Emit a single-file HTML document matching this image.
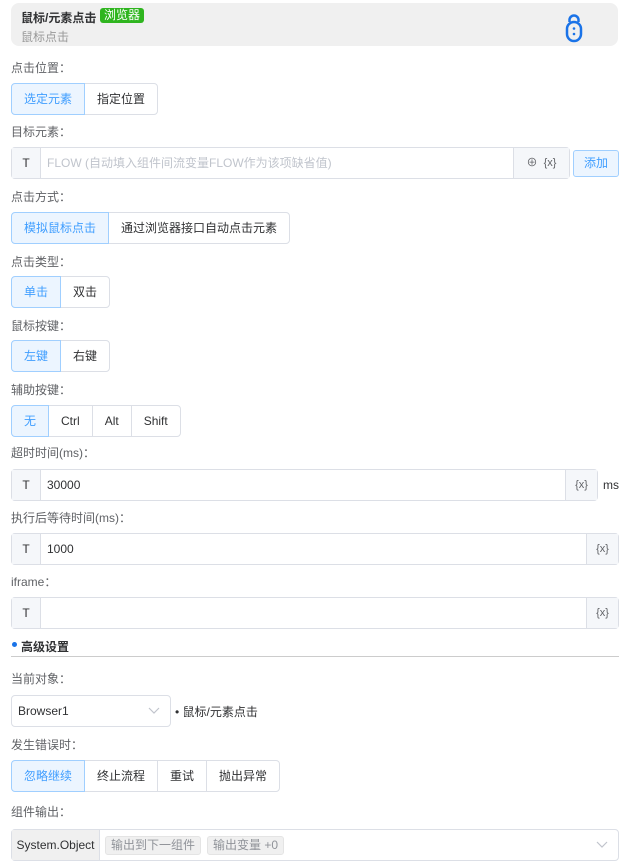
<!DOCTYPE html>
<html><head><meta charset="utf-8"><style>
*{box-sizing:border-box;margin:0;padding:0}
body{width:630px;height:866px;background:#fff;font-family:"Liberation Sans","Noto Sans CJK SC",sans-serif;font-size:12px;color:#606266;position:relative;overflow:hidden}
.a{position:absolute}
.lbl{position:absolute;left:11px;font-size:12px;color:#606266;line-height:14px}
.grp{position:absolute;left:11px;display:flex;height:32px}
.grp div{border:1px solid #dcdfe6;margin-left:-1px;padding:0 12px;line-height:30px;color:#303133;background:#fff}
.grp div:first-child{margin-left:0;border-radius:4px 0 0 4px}
.grp div:last-child{border-radius:0 4px 4px 0}
.grp div.on{background:#ecf5ff;border-color:#a0cfff;color:#409eff;position:relative;z-index:1}
.inp{position:absolute;left:11px;height:32px;border:1px solid #dcdfe6;border-radius:4px;display:flex;background:#fff}
.inp .t{width:29px;background:#f5f7fa;border-right:1px solid #dcdfe6;text-align:center;line-height:30px;color:#303133}
.inp .v{flex:1;padding-left:6px;line-height:30px;color:#303133}
.inp .x{width:32px;background:#f5f7fa;border-left:1px solid #dcdfe6;text-align:center;line-height:30px;font-size:11px;color:#606266}
.chev{position:absolute;right:10px;top:11px}
</style></head><body>
<div class="a" style="left:11px;top:3px;width:607px;height:43px;background:#f0f0f0;border-radius:8px"></div>
<div class="a" style="left:21px;top:9px;font-weight:bold;color:#303133;font-size:12px">鼠标/元素点击</div>
<div class="a" style="left:100px;top:8px;width:44px;height:15px;background:#2fb51f;border-radius:3px;color:#fff;font-size:12px;line-height:15px;text-align:center">浏览器</div>
<div class="a" style="left:21px;top:28px;color:#999">鼠标点击</div>
<svg class="a" style="left:563px;top:12px" width="22" height="32" viewBox="0 0 22 32"><path d="M6.5 10V8a4.5 4.5 0 0 1 9 0v2" fill="none" stroke="#1a73e8" stroke-width="2.5"/><rect x="4" y="10" width="14" height="19" rx="7" fill="none" stroke="#1a73e8" stroke-width="2.5"/><circle cx="11" cy="16.5" r="1.3" fill="#1a73e8"/><circle cx="11" cy="22" r="1.3" fill="#1a73e8"/></svg>

<div class="lbl" style="top:61px">点击位置：</div>
<div class="grp" style="top:83px"><div class="on">选定元素</div><div>指定位置</div></div>

<div class="lbl" style="top:125px">目标元素：</div>
<div class="inp" style="top:147px;width:559px"><div class="t">T</div><div class="v" style="color:#c0c4cc">FLOW (自动填入组件间流变量FLOW作为该项缺省值)</div><div class="x" style="width:56px">⊕ &nbsp;{x}</div></div>
<div class="a" style="left:573px;top:150px;width:46px;height:27px;background:#ecf5ff;border:1px solid #a0cfff;border-radius:3px;color:#409eff;text-align:center;line-height:25px">添加</div>

<div class="lbl" style="top:190px">点击方式：</div>
<div class="grp" style="top:212px"><div class="on">模拟鼠标点击</div><div>通过浏览器接口自动点击元素</div></div>

<div class="lbl" style="top:255px">点击类型：</div>
<div class="grp" style="top:276px"><div class="on">单击</div><div>双击</div></div>

<div class="lbl" style="top:319px">鼠标按键：</div>
<div class="grp" style="top:340px"><div class="on">左键</div><div>右键</div></div>

<div class="lbl" style="top:383px">辅助按键：</div>
<div class="grp" style="top:405px"><div class="on">无</div><div>Ctrl</div><div>Alt</div><div>Shift</div></div>

<div class="lbl" style="top:446px">超时时间(ms)：</div>
<div class="inp" style="top:469px;width:587px"><div class="t">T</div><div class="v">30000</div><div class="x">{x}</div></div>
<div class="a" style="left:603px;top:478px;color:#303133">ms</div>

<div class="lbl" style="top:511px">执行后等待时间(ms)：</div>
<div class="inp" style="top:533px;width:608px"><div class="t">T</div><div class="v">1000</div><div class="x">{x}</div></div>

<div class="lbl" style="top:575px">iframe：</div>
<div class="inp" style="top:597px;width:608px"><div class="t">T</div><div class="v"></div><div class="x">{x}</div></div>

<div class="a" style="left:12px;top:642px;width:5px;height:5px;border-radius:50%;background:#1a73e8"></div>
<div class="a" style="left:21px;top:638px;font-weight:bold;color:#303133">高级设置</div>
<div class="a" style="left:11px;top:656px;width:608px;height:1px;background:#ccc"></div>

<div class="lbl" style="top:672px">当前对象：</div>
<div class="a" style="left:11px;top:695px;width:160px;height:32px;border:1px solid #dcdfe6;border-radius:4px;padding-left:6px;line-height:30px;color:#303133">Browser1<svg class="chev" width="12" height="8" viewBox="0 0 12 8"><path d="M1 1l5 5 5-5" fill="none" stroke="#c0c4cc" stroke-width="1.2"/></svg></div>
<div class="a" style="left:175px;top:703px;color:#303133">• 鼠标/元素点击</div>

<div class="lbl" style="top:738px">发生错误时：</div>
<div class="grp" style="top:760px"><div class="on">忽略继续</div><div>终止流程</div><div>重试</div><div>抛出异常</div></div>

<div class="lbl" style="top:805px">组件输出：</div>
<div class="a" style="left:11px;top:829px;width:608px;height:32px;border:1px solid #dcdfe6;border-radius:4px;display:flex">
<div style="width:88px;background:#f0f0f0;border-right:1px solid #dcdfe6;line-height:30px;text-align:center;color:#303133">System.Object</div>
<div style="margin:6px 0 0 5px;height:19px;padding:0 5px;background:#f0f0f0;border:1px solid #e4e4e4;border-radius:3px;line-height:17px;color:#909399">输出到下一组件</div>
<div style="margin:6px 0 0 6px;height:19px;padding:0 5px;background:#f0f0f0;border:1px solid #e4e4e4;border-radius:3px;line-height:17px;color:#909399">输出变量 +0</div>
<svg class="chev" width="12" height="8" viewBox="0 0 12 8"><path d="M1 1l5 5 5-5" fill="none" stroke="#c0c4cc" stroke-width="1.2"/></svg>
</div>
</body></html>
